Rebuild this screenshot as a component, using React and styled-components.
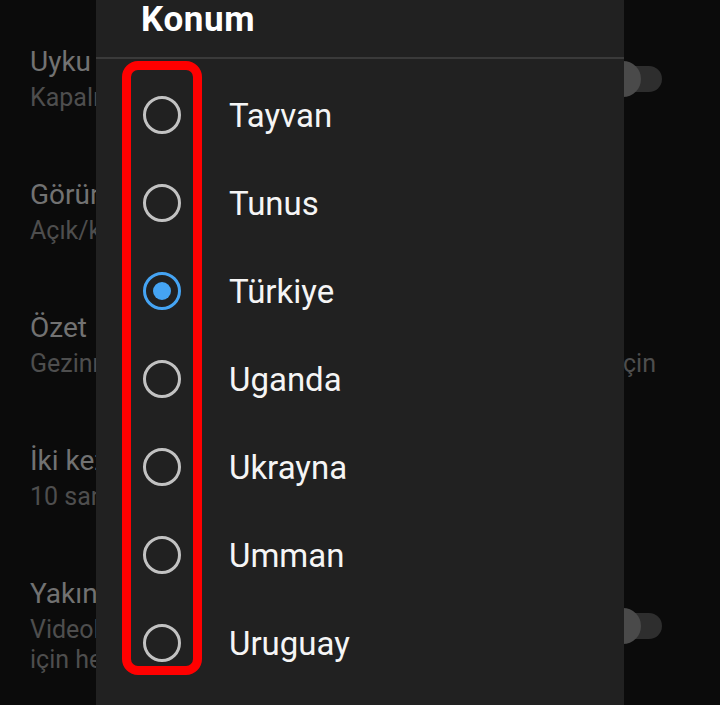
import React from 'react'
import styled, { createGlobalStyle } from 'styled-components'

const GlobalStyle = createGlobalStyle`
html, body {
    margin: 0;
    padding: 0;
    background: #0b0b0b;
    font-family: Roboto, "Noto Sans", "Liberation Sans", sans-serif;
}
`

const settings = [
    { title: 'Uyku zamanı hatırlatıcısı', sub: ['Kapalı'], toggle: true },
    { title: 'Görünüm', sub: ['Açık/koyu tema cihaz ayarını kullan'] },
    { title: 'Özet', sub: ['Gezinme sırasında videoların özetini göstermek için'], fill: true },
    { title: 'İki kez dokunarak ileri/geri sar', sub: ['10 saniye'] },
    { title: 'Yakındaki videolar', sub: ['Videoları yakındaki cihazlarla paylaşmak', 'için hesabınızı kullanın'], toggle: true },
]

const countries = ['Tayvan', 'Tunus', 'Türkiye', 'Uganda', 'Ukrayna', 'Umman', 'Uruguay']

const App = () => {
    return (
        <>
            <GlobalStyle />
            <Screen>
                <SettingsList>
                    {settings.map((s) => (
                        <SettingItem key={s.title}>
                            <SettingText>
                                <SettingTitle>{s.title}</SettingTitle>
                                <SettingSub $fill={s.fill}>
                                    {s.sub.map((line) => (
                                        <div key={line}>{line}</div>
                                    ))}
                                </SettingSub>
                            </SettingText>
                            {s.toggle && (
                                <Switch>
                                    <Thumb />
                                </Switch>
                            )}
                        </SettingItem>
                    ))}
                </SettingsList>

                <Dialog>
                    <Header>
                        <Title>Konum</Title>
                    </Header>
                    <Options>
                        {countries.map((c) => (
                            <Option key={c}>
                                <Radio checked={c === 'Türkiye'} />
                                <OptionLabel>{c}</OptionLabel>
                            </Option>
                        ))}
                        <Highlight />
                    </Options>
                </Dialog>
            </Screen>
        </>
    )
}

export default App

const Screen = styled.div`
position: relative;
width: 720px;
height: 705px;
overflow: hidden;
background: #0b0b0b;
`

const SettingsList = styled.div`
display: flex;
flex-direction: column;
padding: 12px 58px 0 30px;
`

const SettingItem = styled.div`
display: flex;
align-items: center;
padding: 32px 0;
`

const SettingText = styled.div`
flex: 1;
min-width: 0;
`

const SettingTitle = styled.div`
font-size: 28px;
line-height: 36px;
color: #727272;
white-space: nowrap;
`

const SettingSub = styled.div`
margin-top: 3px;
font-size: 25px;
line-height: 30px;
color: #4e4e4e;
white-space: nowrap;
${(p) => p.$fill && `
    padding-right: 6px;
    text-align: justify;
    text-align-last: justify;
`}
`

const Switch = styled.div`
position: relative;
flex-shrink: 0;
width: 64px;
height: 26px;
border-radius: 13px;
background: #2e2e2e;
`

const Thumb = styled.div`
position: absolute;
left: 7px;
top: -5px;
width: 36px;
height: 36px;
border-radius: 50%;
background: #4a4a4a;
`

const Dialog = styled.div`
position: absolute;
top: 0;
left: 96px;
width: 528px;
bottom: 0;
background: #212121;
`

const Header = styled.div`
height: 59px;
padding: 0 0 0 45px;
box-sizing: border-box;
border-bottom: 2px solid #3a3a3a;
`

const Title = styled.div`
font-size: 35px;
line-height: 40px;
font-weight: 700;
letter-spacing: 0.6px;
color: #ffffff;
`

const Options = styled.div`
position: relative;
display: flex;
flex-direction: column;
padding-top: 12px;
`

const Option = styled.div`
display: flex;
align-items: center;
height: 88px;
padding-left: 47px;
`

const Radio = styled.div`
position: relative;
flex-shrink: 0;
width: 38px;
height: 38px;
box-sizing: border-box;
border-radius: 50%;
border: 3px solid ${(p) => (p.checked ? '#45a4f3' : '#c2c2c2')};
margin-right: 48px;

&::after {
    content: '';
    display: ${(p) => (p.checked ? 'block' : 'none')};
    position: absolute;
    left: 7px;
    top: 7px;
    width: 18px;
    height: 18px;
    border-radius: 50%;
    background: #45a4f3;
}
`

const OptionLabel = styled.div`
font-size: 33px;
color: #f5f5f5;
`

const Highlight = styled.div`
position: absolute;
left: 26px;
top: 2px;
width: 80px;
height: 614px;
box-sizing: border-box;
border: 9px solid #ff0000;
border-radius: 16px;
pointer-events: none;
`
